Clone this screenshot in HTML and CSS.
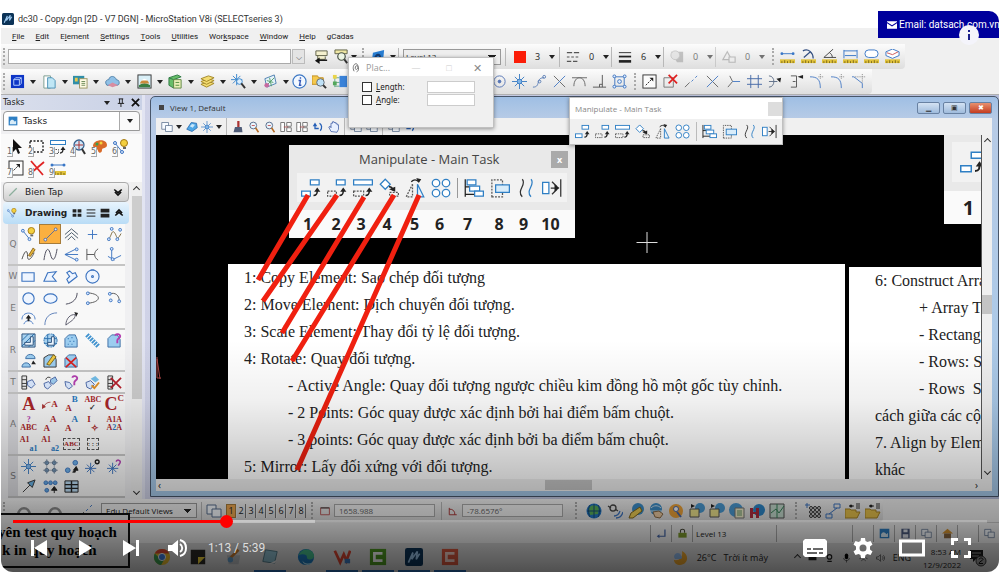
FILE: index.html
```html
<!DOCTYPE html>
<html lang="vi">
<head>
<meta charset="utf-8">
<title>MicroStation V8i</title>
<link rel="stylesheet" href="styles.css">
</head>
<body>
<svg class="defs" aria-hidden="true">
  <symbol id="copy" viewBox="0 0 16 16" fill="#fff" stroke="#2f7fc4"><rect x="7.500" y="1.500" width="7" height="4"/><rect x=".5" y="10.500" width="7" height="4"/><path d="M10 14c3 0 3-2 3-4" fill="none" stroke="#222" stroke-width="1.300"/><path d="M10.500 11 13 7.500l2.500 3.500z" fill="#222" stroke="none"/></symbol>
  <symbol id="move" viewBox="0 0 16 16" fill="none" stroke="#2f7fc4"><rect x="7.500" y="1.500" width="7" height="4" fill="#fff"/><rect x=".5" y="10.500" width="7" height="4" stroke="#555" stroke-dasharray="1.500 1"/><path d="M10 14c3 0 3-2 3-4" stroke="#222" stroke-width="1.300"/><path d="M10.500 11 13 7.500l2.500 3.500z" fill="#222" stroke="none"/></symbol>
  <symbol id="scale" viewBox="0 0 16 16" fill="none" stroke="#2f7fc4"><rect x=".5" y="1.500" width="15" height="4" fill="#fff"/><rect x=".5" y="10.500" width="8" height="4" stroke="#555" stroke-dasharray="1.500 1"/><path d="M10 14c3 0 3-2 3-4" stroke="#222" stroke-width="1.300"/><path d="M10.500 11 13 7.500l2.500 3.500z" fill="#222" stroke="none"/></symbol>
  <symbol id="rotate" viewBox="0 0 16 16" fill="none" stroke="#2f7fc4"><path d="M5 1 9 5 5 9 1 5z" fill="#fff"/><rect x="8.500" y="11.500" width="7" height="3" stroke="#555" stroke-dasharray="1.500 1"/><path d="M8 7c2 0 3 1 3 3" stroke="#222" stroke-width="1.300"/><path d="m8 9 5-2v4z" fill="#222" stroke="none"/></symbol>
  <symbol id="mirror" viewBox="0 0 16 16" fill="none"><path d="M6 5v10H1z" stroke="#555" stroke-dasharray="1.500 1"/><path d="M10 5v10h5z" stroke="#2f7fc4" fill="#e6f2fc"/><path d="M5 3c2-2 4-2 6 0" stroke="#222"/><path d="m9 0 4 1-2 3z" fill="#222"/></symbol>
  <symbol id="array" viewBox="0 0 16 16" fill="#fff" stroke="#2f7fc4"><circle cx="4" cy="4" r="3"/><circle cx="12" cy="4" r="3"/><circle cx="4" cy="12" r="3"/><circle cx="12" cy="12" r="3"/></symbol>
  <symbol id="align" viewBox="0 0 16 16" fill="#fff" stroke="#2f7fc4"><path d="M1 1v14M1 7h4M1 13h8" stroke="#222"/><rect x="2.500" y="1.500" width="7" height="4"/><rect x="4.500" y="6.500" width="8" height="4"/><rect x="8.500" y="10.500" width="7" height="4"/></symbol>
  <symbol id="stretch" viewBox="0 0 16 16" fill="none" stroke="#2f7fc4"><path d="M1.500 15V1.500H10V15z" stroke="#555" stroke-dasharray="1.500 1"/><rect x="4.500" y="5.500" width="11" height="6" fill="#d8ecfa"/></symbol>
  <symbol id="waves" viewBox="0 0 16 16" fill="none" stroke="#2f7fc4"><path d="M5 1c4 4-5 9 0 14" stroke="#333"/><path d="M12 1c4 4-5 9 0 14"/></symbol>
  <symbol id="toedge" viewBox="0 0 16 16" fill="none" stroke="#2f7fc4"><rect x=".5" y="3.500" width="5" height="9" fill="#fff"/><path d="M15 1v14M8 3l4 4M8 13l4-4M7 8h4" stroke="#333"/><path d="m10 5 4 3-4 3z" fill="#222" stroke="none"/></symbol>
  <symbol id="cube" viewBox="0 0 16 16"><rect x="1" y="1" width="14" height="14" fill="#0d35c6"/><path d="M4 6h6v6H4zM4 6l2-2h6l-2 2M12 4v6l-2 2" fill="none" stroke="#b9d2ff"/></symbol>
  <symbol id="doc" viewBox="0 0 16 16"><path d="M2 2h7v13H2z" fill="#fff" stroke="#7a9c8f"/><path d="M6 4h5l3 3v8H6z" fill="#bfe6f5" stroke="#4a8fb5"/></symbol>
  <symbol id="refs" viewBox="0 0 16 16"><rect x="0" y="2" width="12" height="9" fill="#2f8ea8"/><rect x="2" y="4" width="3" height="4" fill="#e8c84c"/><rect x="7" y="5" width="8" height="10" fill="#fffbe4" stroke="#9a9463"/><path d="M9 8h4M9 10h4M9 12h4" stroke="#6c8a56"/></symbol>
  <symbol id="cloud" viewBox="0 0 16 16"><path d="M2 12C-1 8 2 6 4 6c1-5 7-4 8 0 4 0 4 6 1 6z" fill="#8fc0e6" stroke="#4d7fa8"/><path d="m3 12 5 2 6-2-6-3z" fill="#d88da0"/></symbol>
  <symbol id="photo" viewBox="0 0 16 16"><rect x="1" y="1" width="14" height="14" fill="#d9eff7" stroke="#333"/><path d="M2 12c4-3 8-3 12 0v2H2z" fill="#3a7f42"/><path d="M3 10c2-5 8-6 10 0z" fill="#c98b3c"/><path d="M5 7c2-3 5-2 6 0z" fill="#fff"/></symbol>
  <symbol id="db" viewBox="0 0 16 16"><path d="m1 4 9-3 4 2-8 3zM1 4v8l5 3V6" fill="#66bd68" stroke="#2f7a45"/><path d="M6 6h8v9H6z" fill="#e9f0b8" stroke="#5f8642"/><path d="M8 9h4M8 12h4" stroke="#4e8a3b"/></symbol>
  <symbol id="levels" viewBox="0 0 16 16" fill="#f3dc72" stroke="#a28625"><path d="m1 11 8-3 6 2-8 4z"/><path d="m1 8 8-3 6 2-8 4z"/><path d="m1 5 8-3 6 2-8 4z"/></symbol>
  <symbol id="burstfind" viewBox="0 0 16 16" fill="none" stroke="#3a85cc"><path d="M6 0v12M0 6h12M2 2l8 8M10 2l-8 8"/><circle cx="9" cy="8" r="3" fill="#dceefc"/><path d="m11 10 4 5" stroke="#333" stroke-width="2"/></symbol>
  <symbol id="sheet" viewBox="0 0 16 16"><path d="m2 5 10-4 2 9-10 4z" fill="#e6f3fa" stroke="#4d7fb0"/><path d="m4 12 8-8M4 7l7 2M7 4l2 9" stroke="#55a06a" fill="none"/><circle cx="4" cy="12" r="2.500" fill="#c66aa0"/></symbol>
  <symbol id="info" viewBox="0 0 16 16"><circle cx="8" cy="8" r="7" fill="#f2f8ff" stroke="#3d78c4" stroke-width="1.300"/><path d="M9 3.500v1.500M7 7h2l-1 5h2" fill="none" stroke="#3458b8" stroke-width="1.500"/></symbol>
  <symbol id="folderfind" viewBox="0 0 16 16"><path d="M0 2h6l1 2h5v7H0z" fill="#f5c94d" stroke="#c28e1e"/><circle cx="9" cy="9" r="4" fill="#bfe1f7" stroke="#5d6670"/><path d="m12 12 3 3" stroke="#333" stroke-width="2"/></symbol>
  <symbol id="tree" viewBox="0 0 16 16"><path d="M3 2v12M3 4h5M3 9h5M3 13h5" stroke="#6a8" fill="none"/><rect x="1" y="1" width="4" height="4" fill="#e9d44a"/><rect x="1" y="8" width="4" height="4" fill="#54a75b"/><rect x="8" y="2" width="8" height="12" fill="#3a82d8"/></symbol>
  <symbol id="chain" viewBox="0 0 16 16"><path d="M2 2h12v5H2zM4 7v4h8V8" fill="#f4f0ce" stroke="#5f6147"/><path d="M14 12H5" stroke="#111" stroke-width="1.500"/><path d="M1 12.500 6 9v7z" fill="#111"/></symbol>
  <symbol id="chainfind" viewBox="0 0 16 16"><path d="M1 1h13v4H1z" fill="#efe7a4" stroke="#5f6147"/><circle cx="8" cy="8" r="4" fill="#edf5e4" stroke="#4b5548" stroke-width="1.300"/><path d="m11 11 3 4" stroke="#333" stroke-width="2"/></symbol>
  <symbol id="style" viewBox="0 0 16 16"><path d="m2 4 12-3-1 10-12 2z" fill="#287dd1"/><path d="M4 10c2-5 5-5 6-1" fill="none" stroke="#153b70" stroke-width="2"/></symbol>
  <symbol id="dashes" viewBox="0 0 16 16" stroke="#555" stroke-width="1.200"><path d="M1 3h14" stroke-dasharray="6 2"/><path d="M1 8h14" stroke-dasharray="3 2"/><path d="M1 13h14" stroke-dasharray="5 2"/></symbol>
  <symbol id="weights" viewBox="0 0 16 16" stroke="#222"><path d="M1 3h14"/><path d="M1 7.500h14" stroke-width="2"/><path d="M1 13h14" stroke-width="3"/></symbol>
  <symbol id="trans" viewBox="0 0 16 16"><path d="M1 2h14v12H8z" fill="#a2a2a2"/><circle cx="6" cy="6" r="5" fill="#ddd" stroke="#aaa"/></symbol>
  <symbol id="prio" viewBox="0 0 16 16" fill="#eee" stroke="#999" stroke-width="1.300"><path d="M6 2 1 11h10z"/><path d="M8 8h7v6H8z"/></symbol>
  <symbol id="m1" viewBox="0 0 16 16"><path d="M0 11h16v4H0z" fill="#e0c23c"/><path d="M2 13v2M5 12v3M8 13v2M11 12v3M14 13v2" stroke="#7c6817"/><path d="M2 5h12" stroke="#3976c6"/><circle cx="2" cy="5" r="1.500" fill="#3976c6"/><circle cx="14" cy="5" r="1.500" fill="#3976c6"/></symbol>
  <symbol id="m2" viewBox="0 0 16 16"><path d="M0 11h16v4H0z" fill="#e0c23c"/><path d="M2 13v2M5 12v3M8 13v2M11 12v3M14 13v2" stroke="#7c6817"/><path d="M2 2c6-3 11 2 11 8M3 9l7-6" stroke="#334f80" fill="none" stroke-width="1.300"/></symbol>
  <symbol id="m3" viewBox="0 0 16 16"><path d="M0 11h16v4H0z" fill="#e0c23c"/><path d="M2 13v2M5 12v3M8 13v2M11 12v3M14 13v2" stroke="#7c6817"/><path d="M12 0 2 9h13M8 4c2 1 3 3 3 5" stroke="#444" fill="none"/></symbol>
  <symbol id="m4" viewBox="0 0 16 16"><path d="M0 11h16v4H0z" fill="#e0c23c"/><path d="M2 13v2M5 12v3M8 13v2M11 12v3M14 13v2" stroke="#7c6817"/><path d="M1 1v9M15 1v9M1 2h14M2 7h12" stroke="#3976c6" fill="none"/></symbol>
  <symbol id="m5" viewBox="0 0 16 16"><path d="M0 11h16v4H0z" fill="#e0c23c"/><path d="M2 13v2M5 12v3M8 13v2M11 12v3M14 13v2" stroke="#7c6817"/><rect x="1" y="1" width="14" height="8" rx="4" fill="#fff" stroke="#3976c6"/></symbol>
  <symbol id="m6" viewBox="0 0 16 16"><path d="M0 11h16v4H0z" fill="#e0c23c"/><path d="M2 13v2M5 12v3M8 13v2M11 12v3M14 13v2" stroke="#7c6817"/><path d="m1 3 7-3 7 3v4l-7 3-7-3z" fill="#fff" stroke="#3976c6"/><path d="m2 4 6 2 6-3" fill="none" stroke="#c55"/></symbol>
  <symbol id="target" viewBox="0 0 16 16" fill="none" stroke="#5574b5"><circle cx="8" cy="8" r="6"/><circle cx="8" cy="8" r="1.500" fill="#5574b5"/></symbol>
  <symbol id="burst" viewBox="0 0 16 16" fill="none" stroke="#3f7fc4"><path d="M8 0v16M0 8h16M3 3l10 10M13 3 3 13"/><circle cx="8" cy="8" r="2.500" fill="#7fb4e6"/></symbol>
  <symbol id="tang" viewBox="0 0 16 16" fill="none" stroke="#5a7db5"><path d="M1 14c5 0 5-3 6-6s2-4 6-4"/><circle cx="8" cy="8" r="1.500"/><circle cx="13" cy="3" r="1.500"/></symbol>
  <symbol id="cross" viewBox="0 0 16 16" fill="none" stroke="#666"><path d="m2 2 12 12"/><path d="M14 2 2 14" stroke="#4b7dc5"/></symbol>
  <symbol id="arc" viewBox="0 0 16 16" fill="none" stroke="#666"><path d="M0 4h16M2 13c0-12 12-12 12 0"/></symbol>
  <symbol id="perp" viewBox="0 0 16 16" fill="none" stroke="#555"><path d="M1 14h14M11 1v13M8 14v-3h3"/></symbol>
  <symbol id="nodes" viewBox="0 0 16 16" fill="#e5f0ff" stroke="#3d74c0"><path d="M3 3h10v10H3z" fill="none"/><circle cx="2.500" cy="2.500" r="1.500"/><circle cx="13.500" cy="2.500" r="1.500"/><circle cx="2.500" cy="13.500" r="1.500"/><circle cx="13.500" cy="13.500" r="1.500"/><circle cx="8" cy="8" r="2"/></symbol>
  <symbol id="expand" viewBox="0 0 16 16"><rect x="1" y="1" width="14" height="14" fill="#fbfbfb" stroke="#333"/><path d="m4 12 7-7" stroke="#222" stroke-dasharray="2 1"/><path d="M8 4h4v4z" fill="#222"/></symbol>
  <symbol id="delx" viewBox="0 0 16 16" fill="none"><path d="M1 4h10v10H1z" stroke="#777"/><path d="m6 1 9 9M15 1 6 10" stroke="#df2020" stroke-width="1.800"/></symbol>
  <symbol id="bigx" viewBox="0 0 16 16"><path d="m2 1 12 14M15 2 2 13" stroke="#e02424" stroke-width="1.800"/></symbol>
  <symbol id="partial" viewBox="0 0 16 16" stroke="#666"><path d="m1 14 5-5"/><path d="m8 8 2-2M12 4l2-2" stroke="#4b7dc5"/></symbol>
  <symbol id="trim" viewBox="0 0 16 16" fill="none" stroke="#666"><path d="m2 14 5-6-3-6"/><path d="M7 8h8" stroke="#4b7dc5"/></symbol>
  <symbol id="hash" viewBox="0 0 16 16" stroke="#456aa6"><path d="M4 1v14M12 1v14M0 5h16M0 11h16"/></symbol>
  <symbol id="extend" viewBox="0 0 16 16" fill="none" stroke="#5f6f88"><path d="M1 2c7 0 7 12 0 12M1 8h9"/><path d="m9 5 5-1-1 5z" fill="#222" stroke="none"/></symbol>
  <symbol id="bracket" viewBox="0 0 16 16" fill="none" stroke="#555"><path d="M2 2h6v12H2M4 8h3"/><path d="m9 3 6-2v4z" fill="#222" stroke="none"/></symbol>
  <symbol id="fillet" viewBox="0 0 16 16" fill="none" stroke="#4b7dc5"><path d="M0 3c8 0 11 3 11 12"/><path d="M11 0v6M9 3h6" stroke="#888" stroke-dasharray="1 1"/></symbol>
  <symbol id="chamfer" viewBox="0 0 16 16" fill="none" stroke="#4b7dc5"><path d="M0 3h2l9 7v5"/><path d="M11 0v9M3 3h12" stroke="#888" stroke-dasharray="1 1"/></symbol>
  <symbol id="brush" viewBox="0 0 16 16"><path d="M7 0h3v8H7z" fill="#a33"/><path d="M4 8h9l1 7H2z" fill="#4f5c78"/></symbol>
  <symbol id="zoom" viewBox="0 0 16 16" fill="#eaf5fd"><circle cx="7" cy="6" r="4.500" stroke="#596f8e" stroke-width="1.300"/><path d="m10 9 4 6" stroke="#b56b24" stroke-width="2"/><path d="M5 6h4" stroke="#b33"/></symbol>
  <symbol id="fit" viewBox="0 0 16 16" fill="#fff" stroke="#555"><path d="M1 2h5v12H1zM9 2h6v5H9zM9 9h6v5H9z"/><path d="M5 8h6" stroke="#a44"/></symbol>
  <symbol id="undo" viewBox="0 0 16 16" fill="none" stroke="#2660b7" stroke-width="1.700"><path d="M4 4v6h5M11 13c3-4 2-8-1-10"/><path d="m1 7 3-5 3 5z" fill="#2660b7" stroke="none"/></symbol>
  <symbol id="back" viewBox="0 0 16 16" fill="none" stroke="#888" stroke-width="2.500"><path d="M2 12C3 3 13 3 14 12"/></symbol>
  <symbol id="hook" viewBox="0 0 16 16" fill="none" stroke="#4466a8" stroke-width="1.800"><path d="M13 2v10H4"/><path d="m1 12 4-3v6z" fill="#4466a8" stroke="none"/></symbol>
  <symbol id="hand" viewBox="0 0 16 16"><path d="M4 14 1 8l2-1 1 2V3h2V1h2v1h2v1h2v2h2v6l-2 4z" fill="#e8f0ff" stroke="#3b5ba6"/></symbol>
  <symbol id="boxes" viewBox="0 0 16 16" fill="#f7fbff" stroke="#596f8e"><path d="M1 2h9v9H1z"/><path d="M6 6h9v8H6z"/></symbol>
  <symbol id="blob" viewBox="0 0 16 16"><path d="m1 11 6-9 7 1 1 6-7 5z" fill="#4fa7e6" stroke="#2464a8"/><path d="m5 7 3-3 4 1-3 4z" fill="#c9e8fb"/></symbol>
  <symbol id="arrow" viewBox="0 0 16 16"><path d="M5 0v13l3-3 2 5 2-1-2-5h4z" fill="#111"/></symbol>
  <symbol id="fence" viewBox="0 0 16 16"><path d="M1 2h13v11H1z" fill="none" stroke="#222" stroke-width="1.400" stroke-dasharray="2 1.500"/></symbol>
  <symbol id="views" viewBox="0 0 16 16"><circle cx="8" cy="6" r="5" fill="#cfe8fb" stroke="#38608c" stroke-width="1.300"/><path d="M8 2v8M4 6h8" stroke="#a33"/><path d="m11 10 3 5" stroke="#333" stroke-width="2"/></symbol>
  <symbol id="palette" viewBox="0 0 16 16"><path d="M1 7C1 0 15-1 15 6c0 4-5 2-5 5s-3 4-4 1c0-3-4-2-5-5z" fill="#d96a28"/><circle cx="5" cy="5" r="1.500" fill="#3b9d4a"/><circle cx="9" cy="4" r="1.500" fill="#f2d43c"/></symbol>
  <symbol id="bulb" viewBox="0 0 16 16"><circle cx="11" cy="4" r="3.500" fill="#f3cf3f" stroke="#a47a15"/><path d="M10 8h3v2h-3z" fill="#666"/><path d="m2 4 8 10" stroke="#3d74c0"/><circle cx="2" cy="4" r="1.500" fill="#dbe9ff" stroke="#3d74c0"/><circle cx="9" cy="13" r="1.500" fill="#dbe9ff" stroke="#3d74c0"/></symbol>
  <symbol id="line" viewBox="0 0 16 16" fill="#dbe9ff" stroke="#5c6c94"><path d="m3 13 10-10"/><circle cx="2.500" cy="13.500" r="1.500"/><circle cx="13.500" cy="2.500" r="1.500"/></symbol>
  <symbol id="slash" viewBox="0 0 16 16"><path d="M2 14 14 2" stroke="#8cae9c" stroke-width="2"/></symbol>
  <symbol id="chev" viewBox="0 0 16 16" fill="none" stroke="#456"><path d="m1 8 7-6 7 6M1 12l7-6 7 6M4 14l4-4 4 4"/></symbol>
  <symbol id="plus" viewBox="0 0 16 16" stroke="#3d74c0"><path d="M8 3v10M3 8h10"/></symbol>
  <symbol id="spline" viewBox="0 0 16 16" fill="none" stroke="#7a6538"><path d="M1 14C5 10 5 2 8 6s2 10 7 1"/><g fill="#dbe9ff" stroke="#3d74c0"><circle cx="2" cy="13" r="1.500"/><circle cx="5" cy="2" r="1.500"/><circle cx="11" cy="13" r="1.500"/><circle cx="14" cy="3" r="1.500"/></g></symbol>
  <symbol id="pen" viewBox="0 0 16 16" fill="none" stroke="#444"><path d="M1 13C5 1 7 4 7 10s4 3 7-4"/><path d="m8 9 5-8 2 2-5 7z" fill="#e5b53b" stroke="#8b6416"/></symbol>
  <symbol id="wave" viewBox="0 0 16 16" fill="none" stroke="#445"><path d="M1 14C3 0 6 0 8 8s5 7 7-6"/></symbol>
  <symbol id="branch" viewBox="0 0 16 16" fill="#dbe9ff" stroke="#3d74c0"><path d="M13 2 1 8l12 6M1 8h14" fill="none"/><circle cx="13.500" cy="2.500" r="1.500"/><circle cx="13.500" cy="13.500" r="1.500"/></symbol>
  <symbol id="hbar" viewBox="0 0 16 16" fill="none" stroke="#555"><path d="M2 2v12M2 8h8M14 2c-5 3-5 9 0 12"/></symbol>
  <symbol id="stem" viewBox="0 0 16 16" fill="#dbe9ff" stroke="#3d74c0"><path d="M5 2v12l10-5M1 10l7 4" fill="none"/><circle cx="5" cy="2" r="1.500"/><circle cx="6" cy="13" r="1.500"/></symbol>
  <symbol id="rect" viewBox="0 0 16 16"><path d="M1 4h13v9H1z" fill="#eef5ff" stroke="#3d74c0" stroke-width="1.200"/></symbol>
  <symbol id="shape" viewBox="0 0 16 16"><path d="m5 4 9-1-4 5 4 5H1z" fill="#eef5ff" stroke="#3d74c0" stroke-width="1.200"/></symbol>
  <symbol id="heart" viewBox="0 0 16 16"><path d="M5 15 3 11l3-3-3-4 3-2 3 3 3-1 2 4z" fill="#eef5ff" stroke="#3d74c0" stroke-width="1.200"/></symbol>
  <symbol id="poly" viewBox="0 0 16 16" fill="#eef5ff" stroke="#3d74c0" stroke-width="1.200"><circle cx="8" cy="8" r="7"/><circle cx="8" cy="8" r="1"/><path d="M6 1h4"/></symbol>
  <symbol id="circle" viewBox="0 0 16 16"><circle cx="8" cy="8" r="6" fill="#eef5ff" stroke="#3d74c0" stroke-width="1.200"/></symbol>
  <symbol id="ellipse" viewBox="0 0 16 16"><ellipse cx="8" cy="8" rx="7" ry="5" fill="#eef5ff" stroke="#3d74c0" stroke-width="1.200"/></symbol>
  <symbol id="curve" viewBox="0 0 16 16" fill="none" stroke="#445"><path d="M2 14C10 13 14 8 14 2"/></symbol>
  <symbol id="curve2" viewBox="0 0 16 16" fill="none" stroke="#5d7fb8"><path d="M2 15C2 7 7 2 15 2"/></symbol>
  <symbol id="half" viewBox="0 0 16 16" fill="#dbe9ff" stroke="#3d74c0"><path d="M3 2c15 1 15 10 0 11" fill="none" stroke="#555"/><circle cx="3" cy="2.500" r="1.500"/><circle cx="3" cy="13" r="1.500"/></symbol>
  <symbol id="quarter" viewBox="0 0 16 16" fill="#dbe9ff" stroke="#3d74c0"><path d="M3 3c6-2 10 2 10 7" fill="none" stroke="#555"/><circle cx="3" cy="3" r="1.500"/><circle cx="13" cy="11" r="1.500"/><circle cx="4" cy="10" r="1.500"/></symbol>
  <symbol id="arcup" viewBox="0 0 16 16" fill="none" stroke="#4b7dc5"><path d="M1 9c0-9 14-9 14 0M3 14c2-5 8-5 10 0"/><path d="m5 8 3-4 3 4zM7 8h2v3H7z" fill="#222" stroke="none"/></symbol>
  <symbol id="leaf" viewBox="0 0 16 16" fill="none" stroke="#556"><path d="M2 15C2 8 7 3 12 4 12 9 7 11 2 15"/><path d="m11 1 4 1-2 4z" fill="#222" stroke="none"/></symbol>
  <symbol id="hatch" viewBox="0 0 16 16"><path d="M1 1h14v14H1z" fill="#a9d2ef" stroke="#2b4f7a"/><path d="m1 8 7-7M1 14 14 1M8 15l7-7" stroke="#1f6aa8"/><path d="M10 4h3v9H4v-3h6z" fill="#eef7ff" stroke="#2b4f7a"/></symbol>
  <symbol id="hatch2" viewBox="0 0 16 16"><circle cx="8" cy="8" r="7" fill="#a9d2ef" stroke="#2b6fae" stroke-dasharray="2 1"/><path d="M1 6h14M1 11h14M5 1v14M11 1v14" stroke="#2b6fae"/><path d="M9 4h3v9H5v-3h4z" fill="#eef7ff" stroke="#2b4f7a"/></symbol>
  <symbol id="area" viewBox="0 0 16 16"><path d="M1 15V6l4-4h7l2 5v8z" fill="#9ccdf0" stroke="#3d6fa5"/><path d="M4 6h1M8 5h1M6 9h1M10 9h1M4 12h1M8 12h1" stroke="#2b6fae" stroke-width="1.300"/></symbol>
  <symbol id="zig" viewBox="0 0 16 16"><path d="m2 2 12 12" stroke="#3d91cf" stroke-width="5" stroke-dasharray="2 1"/></symbol>
  <symbol id="areaq" viewBox="0 0 16 16"><path d="M1 15V6l4-4h6l3 5v8z" fill="#9ccdf0" stroke="#3d6fa5"/><path d="M9 3c0-3 6-2 5 1-1 2-3 2-3 4v3" fill="none" stroke="#b33fb0" stroke-width="2"/></symbol>
  <symbol id="areac" viewBox="0 0 16 16" fill="#9ccdf0" stroke="#3d6fa5"><path d="M5 6c0-6 10-6 10 0zM1 15c0-6 9-6 9 0z"/><path d="m11 12 2-4 3 4z" fill="#222" stroke="none"/></symbol>
  <symbol id="areap" viewBox="0 0 16 16"><path d="M1 15V5l5-3h6l2 5v8z" fill="#9ccdf0" stroke="#333"/><path d="m4 12 7-10 3 2-7 9z" fill="#efc943" stroke="#80651a"/></symbol>
  <symbol id="areax" viewBox="0 0 16 16"><path d="M1 15V6l4-4h7l2 5v8z" fill="#9ccdf0" stroke="#3d6fa5"/><path d="m2 5 11 10M13 5 2 15" stroke="#d62020" stroke-width="1.800"/></symbol>
  <symbol id="tag" viewBox="0 0 16 16"><path d="M1 1h5v14H1zM1 5h5M1 9h5M1 12h5" fill="#eee" stroke="#333"/><path d="m7 7 5-2 3 5-4 4-4-3z" fill="#dbe9ff" stroke="#4c69a8"/></symbol>
  <symbol id="tagc" viewBox="0 0 16 16" fill="#dbe9ff" stroke="#4c69a8"><path d="m1 9 5-2 3 4-4 4-3-2z"/><path d="m8 5 5-3 2 4-4 4-3-2z" fill="#9fcdf0"/><path d="M3 5c1-3 3-3 5-2" stroke="#222" fill="none"/></symbol>
  <symbol id="tagq" viewBox="0 0 16 16"><path d="m1 7 5 1 3 4-4 3-3-3z" fill="#dbe9ff" stroke="#4c69a8"/><path d="M9 3c0-3 6-2 5 1-1 2-3 2-3 4v3" fill="none" stroke="#b33fb0" stroke-width="2"/></symbol>
  <symbol id="tagw" viewBox="0 0 16 16"><path d="m1 8 5-2 4 4-4 5-4-2z" fill="#dbe9ff" stroke="#4c69a8"/><path d="m6 4 5-3 4 4-4 3z" fill="#72bde8"/><path d="m7 11 3 3 5-6" stroke="#dc8f26" fill="none" stroke-width="2"/></symbol>
  <symbol id="tagx" viewBox="0 0 16 16"><path d="M1 1h5v14H1zM1 5h5M1 9h5M1 12h5" fill="#eee" stroke="#333"/><path d="m4 3 11 11M15 3 4 14" stroke="#b51d2a" stroke-width="1.800"/></symbol>
  <symbol id="anote" viewBox="0 0 16 16" fill="none" stroke="#a33" stroke-width="1.500"><path d="M2 14c3-7 7-10 13-10"/><path d="m0 15 1-7 5 4z" fill="#a33"/></symbol>
  <symbol id="cells" viewBox="0 0 16 16" fill="#8cb9e2" stroke="#5a6f86"><circle cx="4" cy="4" r="2"/><circle cx="12" cy="4" r="2"/><circle cx="4" cy="12" r="2"/><circle cx="12" cy="12" r="2"/><path d="M4 0v8M0 4h8M12 0v8M8 4h8M4 8v8M0 12h8M12 8v8M8 12h8" stroke-width=".6"/></symbol>
  <symbol id="cells2" viewBox="0 0 16 16" fill="#5fa6e2" stroke="#3d74c0"><circle cx="3" cy="4" r="2"/><circle cx="8" cy="4" r="2"/><circle cx="13" cy="4" r="2"/><circle cx="4" cy="12" r="2"/><path d="m9 12 3-4 3 4zM12 11v4" fill="#222" stroke="#222"/></symbol>
  <symbol id="cellmove" viewBox="0 0 16 16" fill="#6baee6" stroke="#3d74c0"><circle cx="12" cy="4" r="2.500"/><circle cx="4" cy="12" r="2.500"/><path d="m10 12 3-4 2 4zM12 11v3H9" fill="#222" stroke="#222"/></symbol>
  <symbol id="cellq" viewBox="0 0 16 16" stroke="#3d74c0" fill="none"><path d="M6 4v12M0 10h12M2 6l8 8M10 6l-8 8"/><path d="M10 3c0-3 5-2 4 1l-2 3" stroke="#b33fb0" stroke-width="1.600"/></symbol>
  <symbol id="cello" viewBox="0 0 16 16" stroke="#3d74c0" fill="none"><path d="M6 4v12M0 10h12M2 6l8 8M10 6l-8 8"/><circle cx="13" cy="3" r="2" stroke="#222" stroke-width="1.500"/></symbol>
  <symbol id="uparrow" viewBox="0 0 16 16"><path d="m2 14 9-9" stroke="#333"/><path d="m7 4 8-3-3 8z" fill="#65aee0" stroke="#333"/></symbol>
  <symbol id="grid" viewBox="0 0 16 16"><path d="M1 2h14v12H1z" fill="#b9daf2" stroke="#222"/><path d="M1 6h14M1 10h14M8 2v12" stroke="#222" stroke-width="1.500"/></symbol>
  <symbol id="globe" viewBox="0 0 16 16"><circle cx="8" cy="8" r="7.500" fill="#2476c4"/><path d="M3 5c3-4 8-3 10 0l-1 6-8 1z" fill="#59b05a"/><path d="M1 8h14M8 1v14M4 2c-2 4-2 8 0 12M12 2c2 4 2 8 0 12" stroke="#174d78" fill="none"/></symbol>
  <symbol id="sat" viewBox="0 0 16 16" fill="none" stroke="#444" stroke-width="1.300"><circle cx="6" cy="5" r="3"/><path d="m1 3 3 2M8 6l3 2"/><path d="M7 13c4 0 5-2 6-5M9 15c4 0 6-2 7-6" stroke="#3d74c0"/></symbol>
  <symbol id="gpen" viewBox="0 0 16 16"><circle cx="10" cy="6" r="6" fill="#3b8fcb"/><path d="m1 15 2-5 9-6 2 4-9 7z" fill="#efcf54" stroke="#82671b"/></symbol>
  <symbol id="ghand" viewBox="0 0 16 16"><circle cx="8" cy="6" r="6" fill="#3b8fcb"/><path d="M3 5c3-3 7-3 10 0M2 8h12" stroke="#cfe6f5" fill="none"/><path d="m5 9 6-1 4 3-3 4-5-1z" fill="#f0cda4" stroke="#8a6a45"/></symbol>
  <symbol id="gbox" viewBox="0 0 16 16"><circle cx="11" cy="5" r="5" fill="#4a9bd4"/><path d="M1 6h9v8H1z" fill="#f0e68e" stroke="#555"/><path d="m2 1 4 2-4 2z" fill="#222"/></symbol>
  <symbol id="gsheet" viewBox="0 0 16 16"><circle cx="7" cy="7" r="7" fill="#4a9bd4"/><path d="M6 5h9v10H6z" fill="#f3f0cd" stroke="#777"/><path d="M8 8h5M8 10h5M8 12h5" stroke="#696"/></symbol>
  <symbol id="gred" viewBox="0 0 16 16"><circle cx="10" cy="7" r="6" fill="#2d87c9"/><path d="M1 5h3v10H1zM7 5h3v10H7zM4 9h3v2H4z" fill="#b02c3e"/></symbol>
  <symbol id="target2" viewBox="0 0 16 16"><circle cx="8" cy="8" r="7" fill="#eea338"/><circle cx="8" cy="6" r="2.500" fill="#fff" stroke="#4d69a8"/><path d="m9 9 4 5" stroke="#4d69a8" stroke-width="2"/></symbol>
  <symbol id="map" viewBox="0 0 16 16"><path d="M1 1h14v14H1z" fill="#c6ddd0" stroke="#555"/><path d="m2 10 5-4 3 4 5-7M8 1v14" fill="none" stroke="#39835a"/></symbol>
  <symbol id="beads" viewBox="0 0 16 16" fill="none" stroke="#333"><path d="M0 2h5M2 0v5" stroke="#3d74c0"/><circle cx="6" cy="5" r="1.500"/><circle cx="10" cy="5" r="1.500"/><circle cx="14" cy="5" r="1.500"/><circle cx="6" cy="9" r="1.500"/><circle cx="10" cy="9" r="1.500"/><circle cx="14" cy="9" r="1.500"/><circle cx="6" cy="13" r="1.500"/><circle cx="10" cy="13" r="1.500"/><circle cx="14" cy="13" r="1.500"/></symbol>
  <symbol id="link" viewBox="0 0 16 16" fill="none" stroke="#3d74c0"><path d="M9 1h6v4H9zM1 11h6v4H1zM12 5l-8 6"/></symbol>
  <symbol id="openf" viewBox="0 0 16 16"><path d="M0 6h5l1 1h5v2h4l-3 6H0z" fill="#e8c34c" stroke="#a98524"/><path d="M4 3h5M11 1h4M11 3h4M11 5h4" stroke="#333" fill="none"/><circle cx="6" cy="3" r="1.500" fill="#222"/></symbol>
  <symbol id="angle" viewBox="0 0 16 16" fill="none" stroke="#a33" stroke-width="1.500"><path d="M2 3v11h12M2 5c6 0 9 3 9 9"/></symbol>
  <symbol id="dist" viewBox="0 0 16 16"><path d="M1 3h14v11H1z" fill="none" stroke="#b55" stroke-width="1.500"/><path d="M1 3h14" stroke="#555" stroke-width="2"/></symbol>
  <symbol id="lock" viewBox="0 0 16 16"><path d="M5 7V4c0-3 6-3 6 0v3" fill="none" stroke="#443" stroke-width="1.500"/><path d="M2 7h12v7H2z" fill="#7d9a2c"/></symbol>
  <symbol id="pic" viewBox="0 0 16 16"><path d="M1 1h14v14H1z" fill="#2e7fc4"/><path d="M3 9c2-4 5-4 8 0l2-2v6H3z" fill="#d8ecf8"/></symbol>
  <symbol id="floppy" viewBox="0 0 16 16"><path d="M2 1h12v14H2z" fill="#4d5c80"/><path d="M5 2h6v4H5zM4 9h8v5H4z" fill="#e5e9f2"/></symbol>
  <symbol id="home" viewBox="0 0 16 16"><path d="m0 8 8-7 8 7z" fill="#d89530"/><path d="M3 8h10v7H3z" fill="#8a6740"/></symbol>
  <symbol id="gridbtn" viewBox="0 0 16 16" fill="#222"><path d="M1 2h6v5H1zM9 2h6v5H9zM1 9h6v5H1zM9 9h6v5H9z"/></symbol>
  <symbol id="rows" viewBox="0 0 16 16"><path d="M1 3h14M1 8h14M1 13h14" stroke="#222" stroke-width="1.600"/></symbol>
  <symbol id="panes" viewBox="0 0 16 16" fill="#222"><path d="M1 1h14v6H1zM1 9h14v6H1z"/></symbol>
  <symbol id="mu" viewBox="0 0 16 16"><rect width="16" height="16" rx="2" fill="#0c3357"/><path d="M3 13 7 4l-1 6 5-7-1 7 3-5" fill="none" stroke="#9cc8ef" stroke-width="1.500"/></symbol>
  <symbol id="clip" viewBox="0 0 16 16" fill="none" stroke="#777" stroke-width="1.600"><path d="M5 14C2 9 4 2 8 2s4 8 1 9-3-5 0-6 5 8 0 10"/></symbol>
  <symbol id="vv" viewBox="0 0 16 16" fill="none" stroke="#111" stroke-width="2.500"><path d="m2 4 6 5 6-5M3 8l5 5 5-5"/></symbol>
</svg>

<main class="player">
  <div class="app">
    <header class="title"><svg class="i12"><use href="#mu"/></svg><span>dc30 - Copy.dgn [2D - V7 DGN] - MicroStation V8i (SELECTseries 3)</span></header>
    <nav class="menu">
      <button><u>F</u>ile</button><button><u>E</u>dit</button><button>E<u>l</u>ement</button><button><u>S</u>ettings</button><button><u>T</u>ools</button><button><u>U</u>tilities</button><button>Wor<u>k</u>space</button><button><u>W</u>indow</button><button><u>H</u>elp</button><button>gCadas</button>
    </nav>

    <div class="bar bar-one">
      <i class="grip"></i>
      <div class="keyin"><input type="text" aria-label="Key-in"><button aria-label="History">⌵</button></div>
      <button class="b"><svg><use href="#chain"/></svg></button><button class="b"><svg><use href="#chainfind"/></svg></button><i class="dd"></i>
      <i class="grip gap"></i><button class="b wide"><svg><use href="#style"/></svg></button><i class="dd"></i><i class="sep"></i>
      <select class="level" aria-label="Level"><option>Level 13</option></select><i class="sep"></i>
      <button class="attr"><b class="red"></b><span>3</span><i class="dd"></i></button>
      <button class="attr"><svg><use href="#dashes"/></svg><span>0</span><i class="dd"></i></button>
      <button class="attr"><svg><use href="#weights"/></svg><span>6</span><i class="dd"></i></button>
      <button class="attr off"><svg><use href="#trans"/></svg><span>0</span><i class="dd"></i></button>
      <button class="attr off last"><svg><use href="#prio"/></svg><span>0</span><i class="dd"></i></button>
      <i class="grip"></i>
      <button class="b w21"><svg><use href="#m1"/></svg></button><button class="b w21"><svg><use href="#m2"/></svg></button><button class="b w21"><svg><use href="#m3"/></svg></button><button class="b w21"><svg><use href="#m4"/></svg></button><button class="b w21"><svg><use href="#m5"/></svg></button><button class="b w21"><svg><use href="#m6"/></svg></button>
    </div>

    <div class="bar bar-two">
      <i class="grip"></i>
      <div class="pairs">
        <button class="p"><svg><use href="#cube"/></svg><i class="dd"></i></button><button class="p"><svg><use href="#doc"/></svg><i class="dd"></i></button><button class="p"><svg><use href="#refs"/></svg><i class="dd"></i></button><button class="p"><svg><use href="#cloud"/></svg><i class="dd"></i></button><button class="p"><svg><use href="#photo"/></svg><i class="dd"></i></button><button class="p"><svg><use href="#db"/></svg><i class="dd"></i></button><button class="p"><svg><use href="#levels"/></svg><i class="dd"></i></button><button class="p"><svg><use href="#burstfind"/></svg><i class="dd"></i></button><button class="p"><svg><use href="#sheet"/></svg><i class="dd"></i></button>
      </div>
      <button class="b"><svg><use href="#info"/></svg></button><button class="b"><svg><use href="#folderfind"/></svg></button><button class="b"><svg><use href="#tree"/></svg></button>
      <i class="under"></i>
      <button class="b"><svg><use href="#target"/></svg></button><button class="b"><svg><use href="#burst"/></svg></button><button class="b"><svg><use href="#tang"/></svg></button><button class="b"><svg><use href="#cross"/></svg></button><button class="b"><svg><use href="#arc"/></svg></button><button class="b"><svg><use href="#perp"/></svg></button><button class="b"><svg><use href="#nodes"/></svg></button>
      <i class="grip gap"></i>
      <button class="b w21"><svg><use href="#expand"/></svg></button><button class="b w21"><svg><use href="#delx"/></svg></button><button class="b w21"><svg><use href="#partial"/></svg></button><button class="b w21"><svg><use href="#cross"/></svg></button><button class="b w21"><svg><use href="#trim"/></svg></button><button class="b w21"><svg><use href="#hash"/></svg></button><button class="b w21"><svg><use href="#extend"/></svg></button><button class="b w21"><svg><use href="#bracket"/></svg></button><button class="b w21"><svg><use href="#fillet"/></svg></button><button class="b w21"><svg><use href="#fillet"/></svg></button><button class="b w21"><svg><use href="#chamfer"/></svg></button>
    </div>

    <div class="work">
      <aside class="tasks">
        <div class="tasks-head"><span>Tasks</span><i class="dd"></i><svg viewBox="0 0 10 10"><path d="M3 1h5M4 1v5M7 1v5M2 6h7M5.500 6v4" stroke="#111" fill="none"/></svg><svg viewBox="0 0 10 10"><path d="m1 1 8 8M9 1 1 9" stroke="#111" stroke-width="2"/></svg></div>
        <button class="tasks-combo"><svg><use href="#pic"/></svg><span>Tasks</span><i class="dd"></i></button>
        <div class="numbered">
          <button><svg><use href="#arrow"/></svg><b>1</b></button><button><svg><use href="#fence"/></svg><b>2</b></button><button><svg><use href="#scale"/></svg><b>3</b></button><button><svg><use href="#views"/></svg><b>4</b></button><button><svg><use href="#palette"/></svg><b>5</b></button><button><svg><use href="#bulb"/></svg><b>6</b></button><button><svg><use href="#expand"/></svg><b>7</b></button><button><svg><use href="#bigx"/></svg><b>8</b></button><button><svg><use href="#m1"/></svg><b>9</b></button>
        </div>
        <div class="scroller">
          <div class="groups">
            <button class="fold"><svg><use href="#slash"/></svg><span>Bien Tap</span><svg><use href="#vv"/></svg></button>
            <div class="open"><svg><use href="#bulb"/></svg><span>Drawing</span><svg><use href="#gridbtn"/></svg><svg><use href="#rows"/></svg><svg><use href="#panes"/></svg><svg class="flip"><use href="#vv"/></svg></div>
            <section><h3>Q</h3><div class="tools"><button><svg><use href="#bulb"/></svg></button><button class="on"><svg><use href="#line"/></svg></button><button><svg><use href="#chev"/></svg></button><button><svg><use href="#plus"/></svg></button><button><svg><use href="#spline"/></svg></button><button><svg><use href="#pen"/></svg></button><button><svg><use href="#wave"/></svg></button><button><svg><use href="#branch"/></svg></button><button><svg><use href="#hbar"/></svg></button><button><svg><use href="#stem"/></svg></button></div></section>
            <section><h3>W</h3><div class="tools"><button><svg><use href="#rect"/></svg></button><button><svg><use href="#shape"/></svg></button><button><svg><use href="#heart"/></svg></button><button><svg><use href="#poly"/></svg></button></div></section>
            <section><h3>E</h3><div class="tools"><button><svg><use href="#circle"/></svg></button><button><svg><use href="#ellipse"/></svg></button><button><svg><use href="#curve"/></svg></button><button><svg><use href="#half"/></svg></button><button><svg><use href="#quarter"/></svg></button><button><svg><use href="#arcup"/></svg></button><button><svg><use href="#curve2"/></svg></button><button><svg><use href="#leaf"/></svg></button></div></section>
            <section><h3>R</h3><div class="tools"><button><svg><use href="#hatch"/></svg></button><button><svg><use href="#hatch2"/></svg></button><button><svg><use href="#area"/></svg></button><button><svg><use href="#zig"/></svg></button><button><svg><use href="#areaq"/></svg></button><button><svg><use href="#areac"/></svg></button><button><svg><use href="#areap"/></svg></button><button><svg><use href="#areax"/></svg></button></div></section>
            <section><h3>T</h3><div class="tools"><button><svg><use href="#tag"/></svg></button><button><svg><use href="#tagc"/></svg></button><button><svg><use href="#tagq"/></svg></button><button><svg><use href="#tagw"/></svg></button><button><svg><use href="#tagx"/></svg></button></div></section>
            <section><h3>A</h3><div class="tools letters">
              <button class="big">A</button><button><svg class="mini"><use href="#anote"/></svg>A</button><button><span class="lo">A</span><em class="hi">B</em></button><button class="stack"><span>ABC</span><span class="dk">✓</span></button><button class="big">C<sup>C</sup></button>
              <button class="stack"><span class="pk">?</span><span>ABC</span></button><button><span class="lo">A</span><span class="hi">A</span></button><button><span class="lo">A</span><em class="hi">A</em></button><button><span class="hi">I</span><span class="lo">✧</span></button><button class="stack"><span>A1A</span><span>A<em>2</em>A</span></button>
              <button><span class="hi s">A1</span><em class="lo s">a1</em></button><button><span class="hi s">A1</span><em class="lo s">a2</em></button><button><span class="dash">ABC</span></button><button><span class="dash dk">: : :</span></button></div></section>
            <section><h3>S</h3><div class="tools"><button><svg><use href="#burst"/></svg></button><button><svg><use href="#cells"/></svg></button><button><svg><use href="#cellmove"/></svg></button><button><svg><use href="#cello"/></svg></button><button><svg><use href="#cellq"/></svg></button><button><svg><use href="#uparrow"/></svg></button><button><svg><use href="#cells2"/></svg></button><button><svg><use href="#grid"/></svg></button></div></section>
          </div>
          <div class="vbar"><i class="caret up"></i><i class="thumb"></i><i class="caret"></i></div>
        </div>
      </aside>

      <section class="view">
        <div class="view-head"><i class="dot"></i><span>View 1, Default</span><button class="win">▁</button><button class="win">▣</button><button class="win close">✖</button></div>
        <div class="view-tools">
          <button class="p"><svg><use href="#boxes"/></svg><i class="dd"></i></button><button class="b16"><svg><use href="#blob"/></svg></button><button class="p"><svg><use href="#burst"/></svg><i class="dd"></i></button><i class="sep"></i>
          <button class="b16"><svg><use href="#brush"/></svg></button><button class="b16"><svg><use href="#zoom"/></svg></button><button class="b16"><svg><use href="#zoom"/></svg></button><button class="b16"><svg><use href="#fit"/></svg></button><button class="b16"><svg><use href="#fit"/></svg></button><button class="b16"><svg><use href="#undo"/></svg></button><button class="b16"><svg><use href="#hand"/></svg></button><i class="sep"></i><button class="b16"><svg><use href="#boxes"/></svg></button><button class="b16"><svg><use href="#boxes"/></svg></button><i class="sep"></i><button class="b16"><svg><use href="#boxes"/></svg></button><button class="b16"><svg><use href="#undo"/></svg></button>
        </div>
        <div class="canvas-row">
          <div class="canvas">
            <div class="sample">
              <div class="sample-head"><span>Manipulate - Main Task</span><button>x</button></div>
              <div class="sample-tools"><svg><use href="#copy"/></svg><svg><use href="#move"/></svg><svg><use href="#scale"/></svg><svg><use href="#rotate"/></svg><svg><use href="#mirror"/></svg><svg><use href="#array"/></svg><i></i><svg><use href="#align"/></svg><svg><use href="#stretch"/></svg><svg><use href="#waves"/></svg><svg><use href="#toedge"/></svg></div>
              <div class="sample-nums"><b>1</b><b>2</b><b>3</b><b>4</b><b>5</b><b>6</b><b>7</b><b>8</b><b>9</b><b>10</b></div>
            </div>
            <div class="sample next"><div class="sample-tools"><svg><use href="#copy"/></svg></div><div class="sample-nums"><b>1</b></div></div>
            <div class="page one">
              <p>1: Copy Element: Sao chép đối tượng</p><p>2: Move Element: Dịch chuyển đối tượng.</p><p>3: Scale Element: Thay đổi tỷ lệ đối tượng.</p><p>4: Rotate: Quay đối tượng.</p><p class="in">- Active Angle: Quay đối tượng ngược chiều kim đồng hồ một gốc tùy chỉnh.</p><p class="in">- 2 Points: Góc quay được xác định bởi hai điểm bấm chuột.</p><p class="in">- 3 points: Góc quay được xác định bởi ba điểm bấm chuột.</p><p>5: Mirror: Lấy đối xứng với đối tượng.</p>
            </div>
            <div class="page two">
              <p>6: Construct Arra</p><p class="in">+ Array T</p><p class="in">- Rectangu</p><p class="in">- Rows: S</p><p class="in">- Rows&nbsp; Sp</p><p>cách giữa các cột</p><p>7. Align by Elem</p><p>khác</p>
            </div>
            <svg class="marks" viewBox="0 0 826 344"><g stroke="#f02010" stroke-width="5"><path d="M152 60 102 145M181 60 107 166M208 62 126 198M238 60 136 226M263 60 141 335"/></g><path d="M491 97v21M480.500 107.500h21" stroke="#ddd"/><path d="M1 222v21h4M1 224l3 20" fill="none" stroke="#a44"/></svg>
          </div>
          <div class="vbar view-v"><i class="caret up"></i><i class="thumb"></i><i class="caret"></i></div>
        </div>
        <div class="hscroll"><i>‹</i><b></b><i>›</i></div>
      </section>
    </div>

    <div class="bar bottom">
      <i class="grip"></i><button class="b history"><svg><use href="#back"/></svg></button><button class="b history"><svg><use href="#back"/></svg></button><button class="b history"><svg><use href="#partial"/></svg></button>
      <select aria-label="View group"><option>Edu Default Views</option></select><i class="sep"></i><button class="b"><svg><use href="#boxes"/></svg></button>
      <div class="digits"><button class="sel">1</button><button>2</button><button>3</button><button>4</button><button>5</button><button>6</button><button>7</button><button>8</button></div>
      <i class="grip gap"></i><label class="coord"><svg><use href="#dist"/></svg><input type="text" value="1658.988" aria-label="Distance"></label><i class="sep"></i><label class="coord"><svg><use href="#angle"/></svg><input type="text" value="-78.6576°" aria-label="Angle"></label>
      <i class="grip far"></i>
      <button class="b w21"><svg><use href="#globe"/></svg></button><button class="b w21"><svg><use href="#sat"/></svg></button><button class="b w21"><svg><use href="#gpen"/></svg></button><button class="b"><svg><use href="#ghand"/></svg></button><button class="b"><svg><use href="#target2"/></svg></button><button class="b w21"><svg><use href="#gbox"/></svg></button><button class="b"><svg><use href="#gbox"/></svg></button><button class="b"><svg><use href="#gsheet"/></svg></button><button class="b"><svg><use href="#gred"/></svg></button><button class="b"><svg><use href="#map"/></svg></button>
      <i class="grip far"></i><button class="b"><svg><use href="#beads"/></svg></button><button class="b"><svg><use href="#link"/></svg></button><button class="b"><svg><use href="#openf"/></svg></button><button class="b"><svg><use href="#openf"/></svg></button>
    </div>
    <div class="status"><span class="c1"><svg><use href="#hook"/></svg></span><span class="c1"><svg><use href="#lock"/></svg></span><span class="lvl">Level 13</span><span class="c2"></span><span class="c1"></span><span class="c1"><svg><use href="#pic"/></svg></span><span class="c1"><svg><use href="#floppy"/></svg></span><span class="c1"><svg><use href="#boxes"/></svg></span><span class="c1"><svg><use href="#home"/></svg></span><span class="c1"></span><span class="c1"><svg><use href="#boxes"/></svg></span></div>
    <footer class="taskbar">
      <div class="apps">
        <button aria-label="Chrome"><svg viewBox="0 0 20 20"><circle cx="10" cy="10" r="9" fill="#e5b82c"/><path d="M2 6a9 9 0 0 1 16 0h-8z" fill="#d64532"/><path d="M2 6a9 9 0 0 0 7 13l4-7-6-1z" fill="#3c9a50"/><circle cx="10" cy="10" r="4" fill="#3d7de0" stroke="#fff"/></svg></button>
        <button aria-label="Notes"><svg viewBox="0 0 20 20"><path d="M2 2h16v16H2z" fill="#2a2925"/><path d="M10 10h8l-8 8z" fill="#f2d33a"/></svg></button>
        <button aria-label="Paint"><svg viewBox="0 0 20 20"><path d="M2 8h15l-2 10H4z" fill="#b9bdc0"/><path d="m6 11 9-9" stroke="#c27830" stroke-width="3"/><circle cx="6" cy="13" r="3" fill="#629cc8"/></svg></button>
        <button class="run" aria-label="Notepad"><svg viewBox="0 0 20 20"><path d="m5 2 13 2-3 13-13-2z" fill="#8cbccc" stroke="#4d7684"/><path d="M15 17 8 18l10-5z" fill="#eee"/></svg></button>
        <button aria-label="Edge"><svg viewBox="0 0 20 20"><circle cx="10" cy="10" r="9" fill="#1d78bb"/><path d="M2 8C5-1 18 0 19 9c0 4-6 5-8 2 1-4-5-5-9-3z" fill="#46bd8c"/><path d="M6 14c2 4 7 4 11 2-3 4-10 4-11-2z" fill="#a6dcf2"/></svg></button>
        <button class="run" aria-label="WPS"><svg viewBox="0 0 20 20"><path d="m2 3 6 13 4-9 3 7 4-11" fill="none" stroke="#d8432f" stroke-width="3"/><path d="M13 12h6v5h-6z" fill="#3d7ac0"/></svg></button>
        <button class="run" aria-label="Camtasia"><svg viewBox="0 0 20 20"><path d="M1 1h18v18H1z" fill="#4f9a22"/><path d="M15 6H6v8h9" fill="none" stroke="#fff" stroke-width="3"/></svg></button>
        <button class="run" aria-label="MicroStation"><svg><use href="#mu"/></svg></button>
        <button class="run" aria-label="Recorder"><svg viewBox="0 0 20 20"><path d="M1 1h18v18H1z" fill="#d9583f"/><path d="M15 6H6v8h9" fill="none" stroke="#f6d5cd" stroke-width="3"/></svg></button>
      </div>
      <div class="tray"><svg class="moon" viewBox="0 0 16 16"><path d="M9 1c8 4 6 14-2 14-3 0-6-2-6-5 6 1 9-3 8-9z" fill="#eca52c"/><path d="M1 7c0-5 7-5 7-1 2 1 1 3-1 3H2z" fill="#8fb8e8"/></svg><span class="weather">26°C&nbsp;&nbsp; Trời ít mây</span><i class="caret up"></i>
        <svg class="t" viewBox="0 0 16 16"><rect x="1" y="4" width="14" height="8" fill="#1b1b1b"/></svg><svg class="t" viewBox="0 0 16 16"><circle cx="8" cy="6" r="4" fill="none" stroke="#1b1b1b" stroke-width="2"/><path d="M4 14h8" stroke="#1b1b1b" stroke-width="2"/></svg><svg class="t" viewBox="0 0 16 16"><rect x="5" y="0" width="6" height="10" rx="3"/><path d="M3 8c0 6 10 6 10 0M8 12v4" fill="none" stroke="#111"/></svg><svg class="t" viewBox="0 0 16 16"><path d="M1 10C5 4 11 4 15 10M4 13c3-3 5-3 8 0" fill="none" stroke="#222"/></svg><svg class="t" viewBox="0 0 16 16"><path d="M1 6h3l4-4v12l-4-4H1zM11 5c2 2 2 4 0 6M13 3c3 3 3 7 0 10" fill="none" stroke="#222"/></svg>
        <span>ENG</span><span class="clock">8:53 AM<br>12/9/2022</span><svg class="note" viewBox="0 0 18 18"><path d="M1 1h13v9H7l-3 3v-3H1z" fill="#1b1b1b"/><path d="M3 4h9M3 7h7" stroke="#999"/><circle cx="12" cy="12" r="5" fill="#999" stroke="#333"/><path d="M10 10.500c0-2 4-2 4 0 0 1-4 2-4 4h4" fill="none" stroke="#111"/></svg></div>
    </footer>
  </div>

  <form class="dialog place">
    <div class="dialog-head"><svg><use href="#clip"/></svg><span>Plac...</span><b>—</b><b>□</b><b class="x">✕</b></div>
    <div class="field"><input type="checkbox" id="len"><label for="len"><u>L</u>ength:</label><input type="text" aria-label="Length"></div>
    <div class="field"><input type="checkbox" id="ang"><label for="ang"><u>A</u>ngle:</label><input type="text" aria-label="Angle"></div>
  </form>
  <div class="dialog manip">
    <div class="manip-head"><span>Manipulate - Main Task</span><i></i></div>
    <div class="manip-tools"><button><svg><use href="#copy"/></svg></button><button><svg><use href="#move"/></svg></button><button><svg><use href="#scale"/></svg></button><button><svg><use href="#rotate"/></svg></button><button><svg><use href="#mirror"/></svg></button><button><svg><use href="#array"/></svg></button><i></i><button><svg><use href="#align"/></svg></button><button><svg><use href="#stretch"/></svg></button><button><svg><use href="#waves"/></svg></button><button><svg><use href="#toedge"/></svg></button></div>
  </div>
  <div class="caption"><p>yên test quy hoạch</p><p>k in quy hoạch</p></div>
  <a class="email" href="#"><svg viewBox="0 0 12 10"><path d="M0 1h12v1L6 6 0 2zM0 3.500l6 4 6-4V10H0z" fill="#fff"/></svg>Email: datsach.com.vn</a>
  <button class="about" aria-label="Info"><svg viewBox="0 0 20 20"><path d="M10 5v2M10 9v6" stroke="#1a1f8c" stroke-width="2"/></svg></button>

  <div class="shade"></div>
  <div class="controls">
    <div class="track"><i class="loaded"></i><i class="played"></i><input type="range" min="0" max="339" value="73" aria-label="Seek"></div>
    <div class="buttons">
      <button aria-label="Previous"><svg viewBox="0 0 20 20"><path d="M2 2h3v16H2zM18 2v16L5 10z"/></svg></button>
      <button aria-label="Play"><svg viewBox="0 0 20 20"><path d="M4 2v16l13-8z"/></svg></button>
      <button aria-label="Next"><svg viewBox="0 0 20 20"><path d="M15 2h3v16h-3zM2 2v16l13-8z"/></svg></button>
      <button aria-label="Mute"><svg viewBox="0 0 20 20"><path d="M1 7v6h4l6 5V2L5 7z"/><path d="M13 6c3 2 3 6 0 8M13 2c8 2 8 14 0 16" fill="none" stroke="#fff" stroke-width="2"/></svg></button>
      <span class="time">1:13 / 5:39</span>
      <button aria-label="Subtitles"><svg class="w24" viewBox="0 0 24 20"><path fill-rule="evenodd" d="M2 1h20l2 2v14l-2 2H2l-2-2V3zM4 10v2h4v-2zM10 10v2h10v-2zM4 14v2h10v-2zM16 14v2h4v-2z"/></svg></button>
      <button aria-label="Settings"><svg viewBox="0 0 20 20"><path fill-rule="evenodd" d="M8 0h4l.5 3 2 1L17.500 3l2 3.500L17 8.500v3l2.500 2-2 3.500-3-1-2 1-.5 3H8l-.5-3-2-1-3 1-2-3.500 2.500-2v-3L.5 6.500 2.500 3l3 1 2-1zM10 6.500a3.500 3.500 0 1 0 0 7 3.500 3.500 0 0 0 0-7z"/></svg></button>
      <button aria-label="Theater"><svg class="w26" viewBox="0 0 26 20"><path d="M1.500 3h23v14h-23z" fill="none" stroke="#fff" stroke-width="3"/></svg></button>
      <button aria-label="Full screen"><svg viewBox="0 0 20 20"><path d="M1.500 7V1.500H7M13 1.500h5.500V7M18.500 13v5.500H13M7 18.500H1.500V13" fill="none" stroke="#fff" stroke-width="3"/></svg></button>
    </div>
  </div>
</main>
</body>
</html>
```
FILE: styles.css
```css
* { box-sizing: border-box; }
body { margin: 0; background: #fff; font-family: "Open Sans", sans-serif; font-size: 8px; color: #222; overflow: hidden; }
button, input, select { font: inherit; color: inherit; }
button { border: 0; padding: 0; background: none; display: flex; align-items: center; justify-content: center; }
svg { display: block; flex: none; }
p, h3 { margin: 0; }
i, em { font-style: normal; }
.defs { position: absolute; width: 0; height: 0; }

.player { position: relative; margin: 0 1px; height: calc(100vh - 6px); border-radius: 0 0 12px 12px; overflow: hidden; }
.app { height: 100%; display: flex; flex-direction: column; background: #f0f0f0; }
.title { height: 28px; padding: 10px 0 0 1px; display: flex; align-items: center; gap: 4px; background: #fff; font: 9px Roboto, sans-serif; color: #333; flex: none; white-space: nowrap; }
.i12 { width: 12px; height: 12px; }
.menu { height: 16px; padding-left: 11px; display: flex; align-items: center; gap: 11px; flex: none; font-family: Roboto, sans-serif; }

.bar { display: flex; align-items: center; flex: none; align-self: flex-start; height: 25px; background: linear-gradient(#fcfcfc, #dedede); border-radius: 0 0 4px 4px; }
.bar svg { width: 15px; height: 15px; }
.bar-one { padding-right: 2px; }
.bar-two { padding-right: 2px; }
.grip { width: 2px; height: 17px; margin: 0 3px 0 2px; border-left: 2px dotted #aaa; flex: none; }
.grip.gap { margin: 0 3px 0 5px; }
.grip.far { margin: 0 6px 0 8px; }
.sep { width: 1px; height: 18px; background: #b8b8b8; margin: 0 2px; flex: none; }
.dd { border: 3px solid transparent; border-top: 4px solid #222; border-bottom: 0; width: 6px; flex: none; }
.b { width: 20px; height: 20px; flex: none; }
.b.w21 { width: 21px; }
.b.wide { width: 23px; }
.keyin { display: flex; width: 297px; height: 15px; gap: 1px; margin-right: 6px; }
.keyin input { flex: 1; min-width: 0; border: 1px solid #aaa; background: #fff; }
.keyin button { width: 13px; border: 1px solid #bbb; background: #e4e4e4; color: #444; }
select { appearance: none; background: linear-gradient(45deg, #0000 50%, #222 50%) no-repeat right 8px center / 4px 4px, linear-gradient(-45deg, #0000 50%, #222 50%) no-repeat right 4px center / 4px 4px, #eee; }
.level { width: 98px; height: 16px; margin: 0 2px; padding: 0 2px; border: 1px solid #999; font-size: 8px; }
.attr { width: 52px; height: 20px; gap: 8px; justify-content: flex-start; padding-left: 6px; border-right: 1px solid #b8b8b8; }
.attr.last { border: 0; width: 54px; }
.attr.off { opacity: .6; }
.attr svg { width: 14px; height: 14px; }
.attr span { width: 7px; font-size: 9px; }
.red { width: 12px; height: 12px; background: #fb1d08; }
.pairs { width: 281px; padding-left: 2px; display: flex; justify-content: space-between; }
.p { gap: 5px; height: 18px; }
.under { width: 140px; }

.work { flex: 1; min-height: 0; display: flex; background: linear-gradient(90deg, #d4d6ea, #b4bcd8); border-top: 1px solid #b0b0b0; }
.tasks { width: 144px; flex: none; background: #f0f0f2; display: flex; flex-direction: column; border-right: 3px solid #e2e4f2; }
.tasks-head { height: 15px; display: flex; align-items: center; gap: 6px; padding: 0 2px; background: linear-gradient(90deg, #dadfec, #c9d1e6); }
.tasks-head span, .tasks-combo span { flex: 1; text-align: left; font-family: "DejaVu Sans", sans-serif; }
.tasks-head svg { width: 9px; height: 9px; }
.tasks-combo { height: 20px; margin: 1px 2px 3px; padding: 0 6px 0 4px; gap: 5px; border: 1px solid #999; border-radius: 4px 4px 0 0; background: linear-gradient(90deg, #fff 85%, #aaa 85%, #aaa 86%, #fafafa 86%); }
.tasks-combo span { font-size: 9px; }
.tasks-combo svg { width: 10px; height: 10px; }
.numbered { display: grid; grid-template-columns: repeat(6, 21px); grid-auto-rows: 21px; padding: 2px 0 4px 5px; background: #fafafa; }
.numbered button { position: relative; justify-content: flex-end; padding-right: 3px; }
.numbered svg { width: 16px; height: 16px; }
.numbered b { position: absolute; left: 1px; bottom: 0; font: 8px "DejaVu Sans", sans-serif; color: #666; background: #fafafa; border: 1px solid #aaa; border-width: 0 1px 1px 0; }
.scroller { display: flex; flex: 1; min-height: 0; gap: 2px; padding-left: 2px; }
.groups { flex: 1; min-width: 0; font-family: "DejaVu Sans", sans-serif; }
.fold, .open { width: 100%; height: 20px; display: flex; align-items: center; gap: 7px; padding: 0 5px 0 4px; border: 1px solid #aaa; border-radius: 4px; background: linear-gradient(#f4f4f4, #cfcfcf); font-size: 9px; }
.fold svg, .open svg { width: 10px; height: 10px; }
.fold span { flex: 1; text-align: left; }
.open { border: 0; height: 22px; gap: 4px; background: linear-gradient(#e8f4fd, #b9dcf6); font-weight: 700; }
.open span { flex: 1; padding-left: 4px; }
.flip { transform: rotate(180deg); }
.groups section { display: flex; margin: 0 4px 0 5px; background: #f8f8f8; border-bottom: 2px solid #c4c4c4; }
.groups h3 { width: 10px; font: 9px "DejaVu Sans", sans-serif; color: #777; background: #dcdce0; display: flex; align-items: center; justify-content: center; }
.tools { flex: 1; display: grid; grid-template-columns: repeat(5, 1fr); grid-auto-rows: 20px; }
.tools svg { width: 15px; height: 15px; }
.on { background: #fbb040; border: 1px solid #a67c3a; }
.letters { font-family: "Liberation Serif", serif; font-weight: 700; color: #a8262a; font-size: 9px; }
.letters button { min-width: 0; }
.letters .big { font-size: 18px; line-height: 18px; }
.letters sup { font-size: 9px; line-height: 9px; align-self: flex-start; }
.letters .mini { width: 9px; height: 9px; }
.letters em { color: #2878c0; }
.stack { flex-direction: column; line-height: 8px; font-size: 8px; }
.letters .lo { align-self: flex-end; line-height: 11px; }
.letters .hi { align-self: flex-start; line-height: 11px; }
.letters .s { font-size: 8px; }
.letters .dk { color: #333; }
.letters .pk { color: #b33fb0; }
.dash { border: 1px dashed #555; font-size: 7px; line-height: 10px; }
.vbar { width: 11px; display: flex; flex-direction: column; align-items: center; justify-content: space-between; padding: 5px 0; background: #efefef; }
.vbar .thumb { width: 10px; flex: 1; margin: 4px 0 90px; background: #cdcdcd; }
.caret { width: 5px; height: 5px; border: solid #333; border-width: 0 1px 1px 0; transform: rotate(45deg); flex: none; }
.caret.up { transform: rotate(225deg); }

.view { flex: 1; min-width: 0; margin: 1px 0 2px 5px; padding: 0 6px 5px 5px; display: flex; flex-direction: column; background: linear-gradient(#9fbfe4, #b7cbe6 22px, #a5c8e8); border: 1px solid #48566a; border-radius: 5px 5px 0 0; }
.view-head { height: 21px; display: flex; align-items: center; gap: 3px; padding: 0 0 0 3px; flex: none; }
.view-head span { flex: 1; padding-left: 3px; color: #333; }
.dot { width: 5px; height: 5px; background: #444; }
.win { width: 23px; height: 12px; border: 1px solid #6881a2; border-radius: 2px; background: linear-gradient(#d3e2f3, #9fbbdc); font-size: 7px; color: #333; }
.win.close { background: linear-gradient(#e8906f, #c43c20); color: #fff; }
.view-tools { height: 17px; display: flex; align-items: center; gap: 1px; padding: 0 4px; background: #f0f0f0; flex: none; }
.view-tools svg { width: 12px; height: 12px; }
.view-tools .p { width: 23px; gap: 3px; }
.b16 { width: 15px; height: 15px; }
.canvas-row { flex: 1; min-height: 0; display: flex; }
.canvas { position: relative; flex: 1; min-width: 0; overflow: hidden; background: #000; }
.view-v { padding: 4px 0 5px; border-left: 1px solid #555; }
.view-v .thumb { flex: none; height: 19px; margin: 40px 0 45px; background: #c4c4c4; }
.hscroll { height: 12px; flex: none; display: flex; align-items: center; justify-content: space-between; padding: 0 14px 0 2px; background: #f0f0f0; font-size: 10px; }
.hscroll b { width: 47px; height: 10px; background: #c4c4c4; }

.sample { position: absolute; left: 133px; top: 10px; width: 286px; background: #e9e9e9; }
.sample-head { height: 28px; display: flex; align-items: center; padding: 0 7px 0 70px; color: #444; font-size: 13px; }
.sample-head span { flex: 1; white-space: nowrap; }
.sample-head button { width: 17px; height: 17px; background: #aaa; color: #fff; font-size: 9px; font-weight: 700; }
.sample-tools { height: 29px; margin: 0 8px 8px; padding: 0 5px 0 4px; display: flex; align-items: center; justify-content: space-between; background: #f2f2f2; }
.sample-tools svg { width: 20px; height: 20px; }
.sample-tools i { width: 1px; height: 20px; background: #999; }
.sample-nums { height: 28px; padding-left: 4px; display: grid; grid-template-columns: 29px 28px 22px 30px 25px 25px 31px 32px 17px 37px; align-items: center; background: #fafafa; color: #222; font-size: 16px; text-align: center; }
.sample.next { left: 788px; top: 0; padding-top: 7px; }
.next .sample-tools { height: 40px; padding: 0 8px; margin-bottom: 9px; }
.next .sample-tools svg { width: 24px; height: 24px; }
.next .sample-nums { height: 33px; padding-left: 10px; font-size: 20px; }
.page { position: absolute; top: 129px; bottom: 0; background: #fff; font: 16px/27px "Liberation Serif", serif; color: #222; white-space: nowrap; }
.page .in { padding-left: 44px; }
.page.one { left: 72px; width: 617px; padding-left: 16px; }
.page.two { left: 693px; right: 0; top: 132px; padding-left: 26px; overflow: hidden; }
.marks { position: absolute; left: 0; top: 0; width: 826px; height: 344px; }

.bottom { height: 23px; background: linear-gradient(#f4f4f4, #dadada); }
.bottom .history { width: 31px; }
.bottom select { width: 96px; height: 15px; padding: 0 4px; border: 1px solid #999; font-size: 8px; margin-right: 2px; }
.bottom .b svg { width: 16px; height: 16px; }
.digits { display: flex; margin-left: 2px; }
.digits button { width: 10px; height: 14px; border-right: 1px solid #777; border-left: 1px solid #eee; font-size: 9px; }
.digits .sel { background: #f0a850; border: 1px solid #a67c3a; }
.coord { display: flex; align-items: center; gap: 4px; padding: 0 4px; }
.coord svg { width: 10px; height: 10px; }
.coord input { width: 101px; height: 13px; padding: 0 4px; border: 1px solid #aaa; background: #f4f4f4; color: #666; font-size: 8px; }
.status { height: 21px; flex: none; display: flex; align-items: center; justify-content: flex-end; border-top: 1px solid #c8c8c8; }
.status span { height: 17px; display: flex; align-items: center; justify-content: center; border-left: 1px solid #aaa; }
.status svg { width: 11px; height: 11px; }
.status .c1 { width: 21px; }
.status .c2 { width: 76px; }
.status .lvl { width: 84px; padding-left: 3px; justify-content: flex-start; }
.taskbar { height: 29px; flex: none; display: flex; justify-content: space-between; padding: 0 12px 0 145px; background: #d8d8d8; }
.apps { display: flex; gap: 4px; }
.apps button { width: 32px; border-bottom: 2px solid transparent; }
.apps .run { border-color: #2667ac; }
.apps svg { width: 18px; height: 18px; }
.tray { display: flex; align-items: center; gap: 8px; font-size: 9px; white-space: nowrap; }
.moon { width: 16px; height: 16px; }
.note { width: 18px; height: 18px; }
.weather { width: 90px; }
.tray .t { width: 9px; height: 10px; }
.clock { width: 42px; line-height: 13px; text-align: right; font-size: 8px; }

.dialog { position: absolute; background: #f0f0f0; border: 1px solid #c0c0c0; box-shadow: 0 1px 4px #0006; }
.place { left: 347px; top: 57px; width: 146px; height: 71px; }
.dialog-head { height: 18px; margin-bottom: 4px; display: flex; align-items: center; gap: 5px; padding: 0 7px 0 2px; background: #fff; color: #999; font-size: 9px; }
.dialog-head svg { width: 10px; height: 13px; }
.dialog-head span { flex: 1; }
.dialog-head b { width: 28px; text-align: center; font-weight: 400; color: #ccc; }
.dialog-head .x { width: 18px; color: #888; font-size: 11px; }
.field { height: 13px; display: flex; align-items: center; gap: 4px; padding: 0 18px 0 13px; font-family: "Noto Sans", sans-serif; }
.field label { flex: 1; }
.field input { margin: 0; border: 1px solid #999; background: #fff; appearance: none; }
.field input[type=checkbox] { width: 10px; height: 10px; border-color: #333; }
.field input[type=text] { width: 48px; height: 12px; padding: 0; border-color: #ccc; }
.manip { left: 568px; top: 97px; width: 214px; }
.manip-head { height: 21px; display: flex; align-items: center; justify-content: space-between; padding-left: 5px; background: #fff; color: #888; }
.manip-head i { width: 14px; height: 14px; background: #ddd; }
.manip-tools { height: 25px; display: flex; align-items: center; justify-content: space-between; padding: 0 5px; }
.manip-tools svg { width: 15px; height: 15px; }
.manip-tools i { width: 1px; height: 19px; background: #bbb; }
.caption { position: absolute; left: -8px; bottom: 4px; width: 137px; height: 55px; padding: 8px 0 0 3px; border: 2px solid #111; background: #e2e2e2; font: 700 15px/18px "Liberation Serif", serif; color: #000; white-space: nowrap; }
.caption p + p { padding-left: 4px; }
.email { position: absolute; right: 0; top: 11px; height: 27px; width: 121px; padding-left: 9px; display: flex; align-items: center; gap: 2px; border-radius: 0 10px 0 0; background: #00009c; color: #fff; font: 10px Roboto, sans-serif; text-decoration: none; white-space: nowrap; }
.email svg { width: 10px; height: 9px; }
.about { position: absolute; right: 20px; top: 25px; width: 20px; height: 20px; border-radius: 50%; background: #f4f4fb; }
.about svg { width: 20px; height: 20px; }

.shade { position: absolute; inset: auto 0 0; height: 232px; pointer-events: none; background: linear-gradient(#0000 0, #0000000f 26%, #00000026 43%, #00000040 60%, #0000005c 78%, #00000080 89%, #000000a0 100%); }
.controls { position: absolute; left: 12px; right: 12px; bottom: 8px; }
.track { position: relative; height: 3px; background: #ffffff38; }
.loaded, .played { position: absolute; left: 0; top: 0; height: 3px; }
.loaded { width: 31%; background: #ffffff60; }
.played { width: 21.7%; background: #f00; }
.track input { position: absolute; left: 0; top: -5px; width: 100%; height: 13px; margin: 0; appearance: none; background: none; }
.track input::-webkit-slider-thumb { appearance: none; width: 13px; height: 13px; border-radius: 50%; background: #f00; }
.buttons { height: 41px; padding: 9px 16px 0 16px; display: flex; align-items: center; gap: 26px; }
.buttons svg { width: 20px; height: 20px; fill: #fff; }
.buttons .w24 { width: 24px; }
.buttons .w26 { width: 26px; }
.time { flex: 1; margin-left: -5px; color: #ddd; font: 12px Roboto, sans-serif; }
```
